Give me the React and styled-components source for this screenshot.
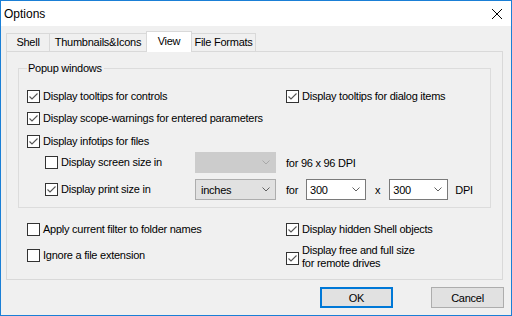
import React from "react";
import styled, { createGlobalStyle } from "styled-components";

const GlobalStyle = createGlobalStyle`
  body {
    margin: 0;
    background: #ffffff;
  }
  * {
    box-sizing: border-box;
  }
`;

const StyledWindow = styled.div`
  width: 512px;
  height: 316px;
  border: 1px solid #1a7fd6;
  display: flex;
  flex-direction: column;
  font-family: "Liberation Sans", Arial, sans-serif;
  font-size: 11px;
  letter-spacing: -0.25px;
  color: #000000;
  background-color: #f0f0f0;
`;

const StyledTitleBar = styled.div`
  height: 25px;
  flex: none;
  display: flex;
  align-items: center;
  justify-content: space-between;
  padding: 0 9px 0 3px;
  background-color: #ffffff;
  font-size: 12px;
  letter-spacing: 0;
`;

const StyledBody = styled.div`
  flex: 1;
  display: flex;
  flex-direction: column;
  padding: 5px 8px 0 5px;
`;

const StyledTabStrip = styled.div`
  height: 20px;
  display: flex;
  align-items: flex-end;
`;

const StyledTab = styled.div`
  position: relative;
  width: ${(props) => props.width}px;
  height: ${(props) => (props.active ? 21 : 18)}px;
  margin-left: -1px;
  margin-bottom: ${(props) => (props.active ? -1 : 0)}px;
  padding-top: ${(props) => (props.active ? 3 : 2)}px;
  border: 1px solid #d9d9d9;
  border-bottom: none;
  background-color: ${(props) => (props.active ? "#ffffff" : "#f0f0f0")};
  z-index: ${(props) => (props.active ? 1 : 0)};
  text-align: center;
  line-height: 13px;

  &:first-child {
    margin-left: 0;
  }
`;

const StyledPanel = styled.div`
  height: 229px;
  border: 1px solid #d9d9d9;
  padding: 10px 11px 0 11px;
  display: flex;
  flex-direction: column;
`;

const StyledGroup = styled.fieldset`
  margin: 0;
  padding: 10px 0 7px 8px;
  border: 1px solid #dcdcdc;
  min-width: 0;
`;

const StyledLegend = styled.legend`
  padding: 0 2px 0 1px;
  line-height: 13px;
`;

const StyledRow = styled.div`
  height: ${(props) => props.height}px;
  margin-top: ${(props) => props.gap || 0}px;
  display: flex;
  align-items: center;
  padding-left: ${(props) => props.indent || 0}px;
`;

const StyledCell = styled.div`
  width: ${(props) => props.width}px;
  flex: none;
  display: flex;
  align-items: center;
`;

const StyledCheckLabel = styled.label`
  display: flex;
  align-items: center;
  gap: 3px;
  margin-top: ${(props) => props.shift || 0}px;
  line-height: 13px;
  white-space: nowrap;
`;

const StyledBox = styled.span`
  width: 13px;
  height: 13px;
  flex: none;
  margin-top: ${(props) => props.shift || 0}px;
  border: 1px solid #333333;
  background-color: #ffffff;
  display: flex;
  align-items: center;
  justify-content: center;
`;

const StyledLines = styled.span`
  display: flex;
  flex-direction: column;
`;

const StyledCombo = styled.div`
  width: ${(props) => props.width}px;
  height: 21px;
  flex: none;
  display: flex;
  align-items: center;
  justify-content: space-between;
  padding: 0 5px 0 ${(props) => (props.editable ? 3 : 5)}px;
  border: 1px solid
    ${(props) => (props.disabled ? "#cccccc" : props.editable ? "#7a7a7a" : "#adadad")};
  background-color: ${(props) =>
    props.disabled ? "#cccccc" : props.editable ? "#ffffff" : "#e1e1e1"};
`;

const StyledText = styled.span`
  margin-left: ${(props) => props.left || 0}px;
  white-space: nowrap;
`;

const StyledLower = styled.div`
  margin-top: 9px;
  padding-left: 9px;
  display: grid;
  grid-template-columns: 259px 1fr;
  grid-template-rows: 25px 26px;
  align-items: center;
`;

const StyledButtons = styled.div`
  display: flex;
  justify-content: flex-end;
  gap: 38px;
  margin: 7px -1px 0 0;
`;

const StyledButton = styled.button`
  width: 73px;
  height: 21px;
  padding: 0;
  font: inherit;
  letter-spacing: inherit;
  color: #000000;
  background-color: #e1e1e1;
  border: ${(props) => (props.primary ? "2px solid #0078d7" : "1px solid #adadad")};
`;

const Check = ({ checked, shift }) => (
  <StyledBox shift={shift}>
    {checked && (
      <svg width="11" height="11" viewBox="0 0 11 11">
        <path d="M1.5 5.5 L4 8 L9.5 2.5" fill="none" stroke="#555555" strokeWidth="1.1" />
      </svg>
    )}
  </StyledBox>
);

const CheckItem = ({ checked, children, lines }) => (
  <StyledCheckLabel shift={lines ? 4 : 0}>
    <Check checked={checked} shift={lines ? 3 : 0} />
    {lines ? (
      <StyledLines>
        {lines.map((line) => (
          <span key={line}>{line}</span>
        ))}
      </StyledLines>
    ) : (
      children
    )}
  </StyledCheckLabel>
);

const Chevron = ({ color }) => (
  <svg width="8" height="5" viewBox="0 0 8 5">
    <path d="M0.5 0.5 L4 4 L7.5 0.5" fill="none" stroke={color} strokeWidth="1" />
  </svg>
);

const Combo = ({ width, value, disabled, editable }) => (
  <StyledCombo width={width} disabled={disabled} editable={editable}>
    <span>{value}</span>
    <Chevron color={disabled ? "#a8a8a8" : "#606060"} />
  </StyledCombo>
);

const CloseIcon = () => (
  <svg width="10" height="10" viewBox="0 0 10 10">
    <path d="M0 0 L10 10 M10 0 L0 10" stroke="#000000" strokeWidth="1" />
  </svg>
);

const tabs = [
  { label: "Shell", width: 44 },
  { label: "Thumbnails&Icons", width: 98 },
  { label: "View", width: 46, active: true },
  { label: "File Formats", width: 65 },
];

export default function App() {
  return (
    <>
      <GlobalStyle />
      <StyledWindow>
        <StyledTitleBar>
          <span>Options</span>
          <CloseIcon />
        </StyledTitleBar>
        <StyledBody>
          <StyledTabStrip>
            {tabs.map((tab) => (
              <StyledTab key={tab.label} width={tab.width} active={tab.active}>
                {tab.label}
              </StyledTab>
            ))}
          </StyledTabStrip>
          <StyledPanel>
            <StyledGroup>
              <StyledLegend>Popup windows</StyledLegend>
              <StyledRow height={22}>
                <StyledCell width={259}>
                  <CheckItem checked>Display tooltips for controls</CheckItem>
                </StyledCell>
                <CheckItem checked>Display tooltips for dialog items</CheckItem>
              </StyledRow>
              <StyledRow height={23}>
                <CheckItem checked>Display scope-warnings for entered parameters</CheckItem>
              </StyledRow>
              <StyledRow height={22}>
                <CheckItem checked>Display infotips for files</CheckItem>
              </StyledRow>
              <StyledRow height={21} indent={18}>
                <StyledCell width={150}>
                  <CheckItem>Display screen size in</CheckItem>
                </StyledCell>
                <Combo width={81} disabled />
                <StyledText left={10}>for 96 x 96 DPI</StyledText>
              </StyledRow>
              <StyledRow height={21} indent={18} gap={6}>
                <StyledCell width={150}>
                  <CheckItem checked>Display print size in</CheckItem>
                </StyledCell>
                <Combo width={81} value="inches" />
                <StyledText left={10}>for</StyledText>
                <StyledText left={8} />
                <Combo width={60} value="300" editable />
                <StyledText left={9}>x</StyledText>
                <StyledText left={9} />
                <Combo width={59} value="300" editable />
                <StyledText left={7}>DPI</StyledText>
              </StyledRow>
            </StyledGroup>
            <StyledLower>
              <CheckItem>Apply current filter to folder names</CheckItem>
              <CheckItem checked>Display hidden Shell objects</CheckItem>
              <CheckItem>Ignore a file extension</CheckItem>
              <CheckItem checked lines={["Display free and full size", "for remote drives"]} />
            </StyledLower>
          </StyledPanel>
          <StyledButtons>
            <StyledButton primary>OK</StyledButton>
            <StyledButton>Cancel</StyledButton>
          </StyledButtons>
        </StyledBody>
      </StyledWindow>
    </>
  );
}
